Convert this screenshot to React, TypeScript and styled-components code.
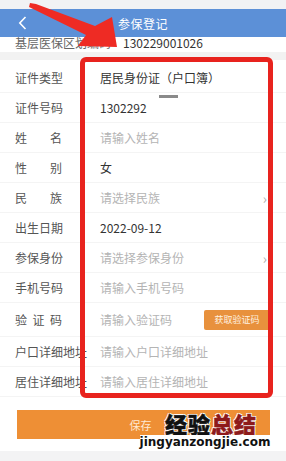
import styled, { createGlobalStyle } from 'styled-components';

const GlobalStyle = createGlobalStyle`
  html, body {
    margin: 0;
    padding: 0;
    background: #ffffff;
  }
  * {
    box-sizing: border-box;
  }
`;

type Field = {
  label: string;
  value?: string;
  placeholder?: string;
  select?: boolean;
  code?: boolean;
  tall?: boolean;
  masked?: boolean;
};

const FIELDS: Field[] = [
  { label: '证件类型', value: '居民身份证（户口簿）' },
  { label: '证件号码', value: '1302292', masked: true },
  { label: '姓名', placeholder: '请输入姓名' },
  { label: '性别', value: '女' },
  { label: '民族', placeholder: '请选择民族', select: true },
  { label: '出生日期', value: '2022-09-12' },
  { label: '参保身份', placeholder: '请选择参保身份', select: true },
  { label: '手机号码', placeholder: '请输入手机号码' },
  { label: '验证码', placeholder: '请输入验证码', code: true, tall: true },
  { label: '户口详细地址', placeholder: '请输入户口详细地址' },
  { label: '居住详细地址', placeholder: '请输入居住详细地址' },
];

export default function App() {
  return (
    <Page>
      <GlobalStyle />
      <TopStrip />
      <Header>
        <Back>
          <svg width="9" height="14" viewBox="0 0 9 14">
            <path d="M7.5 1 L1.8 7 L7.5 13" fill="none" stroke="#fff" strokeWidth="1.6" />
          </svg>
        </Back>
        <HeaderTitle>参保登记</HeaderTitle>
      </Header>
      <CodeRow>
        <CodeLabel>基层医保区划编码</CodeLabel>
        <CodeValue>130229001026</CodeValue>
      </CodeRow>
      <Divider />
      <Form>
        {FIELDS.map((f) => (
          <Row key={f.label} $tall={f.tall}>
            <Label $justify={f.label.length < 4}>
              {f.label.length < 4 ? f.label.split('').map((c, i) => <span key={i}>{c}</span>) : f.label}
            </Label>
            <Value $placeholder={!f.value}>
              {f.value ?? f.placeholder}
              {f.masked && <Mask />}
            </Value>
            {f.select && <Chevron>›</Chevron>}
            {f.code && <CodeButton>获取验证码</CodeButton>}
          </Row>
        ))}
      </Form>
      <Footer>
        <SaveButton>保存</SaveButton>
        <Watermark>
          <WmTitle>
            <span>经验</span>
            <WmRed>总结</WmRed>
          </WmTitle>
          <WmUrl>jingyanzongjie.com</WmUrl>
        </Watermark>
      </Footer>
      <BottomStrip />
      <Highlight />
      <Arrow width="130" height="55" viewBox="0 0 130 55">
        <polygon points="30,3 36,4 95,26 112,17 117,47 78,46 86,35 29,7" fill="#ee2b24" />
      </Arrow>
    </Page>
  );
}

const Page = styled.div`
  position: relative;
  width: 286px;
  height: 461px;
  overflow: hidden;
  background: #ffffff;
  font-family: 'Noto Sans CJK SC', 'Noto Sans', sans-serif;
  display: flex;
  flex-direction: column;
`;

const TopStrip = styled.div`
  height: 9px;
  background: #f1f2f4;
  flex-shrink: 0;
`;

const Header = styled.div`
  position: relative;
  height: 28px;
  flex-shrink: 0;
  background: #5c90d7;
  display: flex;
  align-items: center;
  justify-content: center;
`;

const Back = styled.div`
  position: absolute;
  left: 18px;
  top: 7px;
  display: flex;
`;

const HeaderTitle = styled.div`
  color: #ffffff;
  font-size: 12px;
  letter-spacing: 0.5px;
`;

const CodeRow = styled.div`
  height: 15px;
  flex-shrink: 0;
  overflow: hidden;
  display: flex;
  align-items: flex-start;
  padding-left: 15px;
  gap: 12px;
`;

const CodeLabel = styled.span`
  font-size: 12px;
  line-height: 16px;
  margin-top: -2px;
  color: #666;
`;

const CodeValue = styled.span`
  font-size: 12px;
  line-height: 16px;
  margin-top: -2px;
  color: #333;
`;

const Divider = styled.div`
  height: 8px;
  flex-shrink: 0;
  background: #f2f2f2;
`;

const Form = styled.div`
  padding-top: 3px;
  display: flex;
  flex-direction: column;
`;

const Row = styled.div<{ $tall?: boolean }>`
  position: relative;
  height: ${({ $tall }) => ($tall ? '34px' : '30px')};
  display: flex;
  align-items: center;
  padding-left: 15px;
  border-bottom: 1px solid #f4f4f4;
`;

const Label = styled.span<{ $justify?: boolean }>`
  width: ${({ $justify }) => ($justify ? '47px' : 'auto')};
  min-width: 47px;
  flex-shrink: 0;
  font-size: 12px;
  color: #555;
  white-space: nowrap;
  display: flex;
  justify-content: ${({ $justify }) => ($justify ? 'space-between' : 'flex-start')};
`;

const Value = styled.span<{ $placeholder?: boolean }>`
  position: absolute;
  left: 100px;
  font-size: 12px;
  color: ${({ $placeholder }) => ($placeholder ? '#b4b4b4' : '#333')};
  white-space: nowrap;
`;

const Mask = styled.span`
  position: absolute;
  left: 59px;
  top: -4px;
  width: 19px;
  height: 3px;
  background: #8a8a8a;
`;

const Chevron = styled.span`
  position: absolute;
  right: 19px;
  font-size: 14px;
  color: #aaa;
`;

const CodeButton = styled.div`
  position: absolute;
  left: 204px;
  width: 66px;
  height: 20px;
  background: #e8913d;
  border-radius: 2px;
  color: #fff2e0;
  font-size: 9px;
  display: flex;
  align-items: center;
  justify-content: center;
`;

const Footer = styled.div`
  position: relative;
  padding: 13px 16px 12px 17px;
`;

const SaveButton = styled.div`
  height: 29px;
  background: #ee8f35;
  color: #ffe9d2;
  font-size: 11px;
  display: flex;
  align-items: center;
  justify-content: center;
  padding-right: 6px;
`;

const Watermark = styled.div`
  position: absolute;
  left: 136px;
  top: 14px;
  width: 138px;
  display: flex;
  flex-direction: column;
  align-items: center;
`;

const WmTitle = styled.div`
  font-size: 22px;
  font-weight: 900;
  line-height: 24px;
  letter-spacing: 1px;
  color: #111;
  -webkit-text-stroke: 0.5px #111;
  text-shadow: 1px 1px 0 #fff, -1px -1px 0 #fff, 1px -1px 0 #fff, -1px 1px 0 #fff;
  margin-left: 12px;
`;

const WmRed = styled.span`
  color: #8e1a1a;
  -webkit-text-stroke: 0.5px #8e1a1a;
`;

const WmUrl = styled.div`
  font-family: 'DejaVu Sans', sans-serif;
  font-size: 12px;
  font-weight: 700;
  line-height: 14px;
  color: #111;
  background: #fff;
`;

const BottomStrip = styled.div`
  flex: 1;
  background: #f3f3f4;
`;

const Highlight = styled.div`
  position: absolute;
  left: 80px;
  top: 57px;
  width: 193px;
  height: 341px;
  border: 5px solid #e8231e;
  border-radius: 6px;
  pointer-events: none;
`;

const Arrow = styled.svg`
  position: absolute;
  left: 0;
  top: 0;
  pointer-events: none;
`;
